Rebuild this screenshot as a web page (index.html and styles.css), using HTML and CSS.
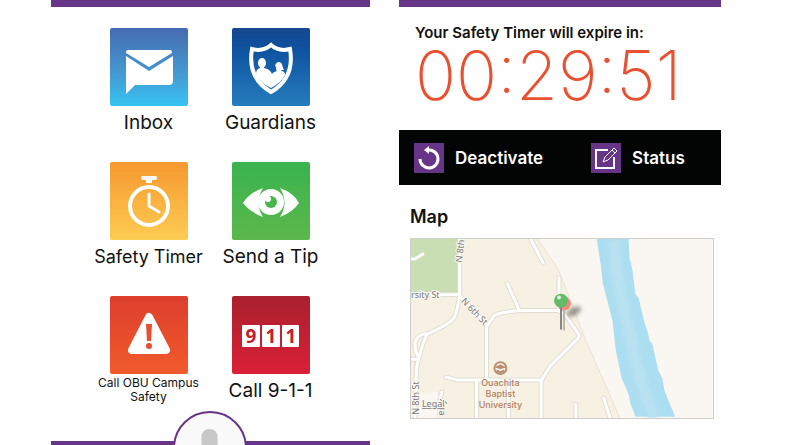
FILE: index.html
```html
<!DOCTYPE html>
<html lang="en">
<head>
<meta charset="utf-8">
<meta name="viewport" content="width=device-width, initial-scale=1">
<title>Campus Safety</title>
<link rel="stylesheet" href="styles.css">
</head>
<body>
<main class="screens">
  <section class="screen home">
    <nav class="tiles">
      <a class="tile" href="#inbox">
        <svg class="icon inbox" viewBox="0 0 78 78" aria-hidden="true">
          <path fill="#fff" d="M18 22h42q2 0 2 3L39 39 16 25q0-3 2-3zM16 28l23 15 24-15v25q0 4-4 4H25l-9 9z"/>
        </svg>
        <span class="label">Inbox</span>
      </a>
      <a class="tile" href="#guardians">
        <svg class="icon guardians" viewBox="0 0 78 78" aria-hidden="true">
          <path fill="none" stroke="#fff" stroke-width="4" d="M39 17q-8 7-19 4-5 29 19 43 24-14 19-43-11 3-19-4z"/>
          <ellipse cx="30" cy="35" rx="4" ry="5" fill="#fff"/>
          <ellipse cx="47" cy="40" rx="3" ry="4" fill="#fff"/>
          <path fill="#fff" d="M43 38q1-4 4-4t4 6l1 2h-3zM24 46q0-5 4-6v-3h4v3q6 1 8 6 1-2 5-3v-2h4v2q4 0 4 4-4 8-14 13-11-5-15-14z"/>
        </svg>
        <span class="label">Guardians</span>
      </a>
      <a class="tile" href="#timer">
        <svg class="icon timer" viewBox="0 0 78 78" aria-hidden="true">
          <circle cx="39" cy="44" r="19" fill="none" stroke="#fff" stroke-width="4"/>
          <path fill="#fff" d="M33 14h13q1 0 1 2t-2 2h-3v3h-6v-3h-3q-2 0-2-2t2-2z"/>
          <path fill="none" stroke="#fff" stroke-width="3" stroke-linecap="round" d="M39 32v12l10 6"/>
        </svg>
        <span class="label medium">Safety Timer</span>
      </a>
      <a class="tile" href="#tip">
        <svg class="icon tip" viewBox="0 0 78 78" aria-hidden="true">
          <path fill="#fff" d="M31 26Q17 31 11 41q7 9 20 14-9-14 0-29zM48 26q14 5 19 15-6 9-19 14 9-14 0-29z"/>
          <circle cx="39" cy="40" r="13" fill="#fff"/>
          <circle cx="39" cy="40" r="6" fill="#49b54d"/>
          <circle cx="36" cy="37" r="3" fill="#fff"/>
        </svg>
        <span class="label">Send a Tip</span>
      </a>
      <a class="tile" href="#campus">
        <svg class="icon campus" viewBox="0 0 78 78" aria-hidden="true">
          <path fill="#fff" stroke="#fff" stroke-width="8" stroke-linejoin="round" d="M39 21 56 54H22z"/>
          <path fill="#e84d2d" d="M36 28h6l-1 17h-4z"/>
          <circle cx="39" cy="50" r="3" fill="#e84d2d"/>
        </svg>
        <span class="label small">Call OBU Campus Safety</span>
      </a>
      <a class="tile" href="tel:911">
        <svg class="icon emergency" viewBox="0 0 78 78" aria-hidden="true">
          <g fill="#fff">
            <rect x="10" y="29" width="18" height="22" rx="1"/>
            <rect x="30" y="29" width="18" height="22" rx="1"/>
            <rect x="50" y="29" width="17" height="22" rx="1"/>
          </g>
          <g class="digits"><text x="19" y="47">9</text><text x="39" y="47">1</text><text x="59" y="47">1</text></g>
        </svg>
        <span class="label">Call 9-1-1</span>
      </a>
    </nav>
    <footer class="dock">
      <button class="mic" type="button" aria-label="Record">
        <svg viewBox="0 0 74 74" aria-hidden="true"><rect x="28" y="17" width="17" height="34" rx="8" fill="#c7c7c7"/></svg>
      </button>
    </footer>
  </section>

  <section class="screen session">
    <div class="countdown">
      <h2 class="caption">Your Safety Timer will expire in:</h2>
      <time class="clock">00:29:51</time>
    </div>
    <div class="actions">
      <button class="action" type="button">
        <svg viewBox="0 0 30 30" aria-hidden="true">
          <path fill="none" stroke="#fff" stroke-width="3" d="M6 16a9 9 0 1 0 8-9"/>
          <path fill="#fff" d="M10 7l5-4v8z"/>
        </svg>
        Deactivate
      </button>
      <button class="action" type="button">
        <svg viewBox="0 0 30 30" aria-hidden="true">
          <path fill="none" stroke="#fff" stroke-width="2" d="M17 7H5v18h18V14"/>
          <path fill="none" stroke="#fff" d="M12 19l2-5 9-9 3 3-9 9zM21 7l3 3"/>
        </svg>
        Status
      </button>
    </div>
    <div class="location">
      <h2 class="heading">Map</h2>
      <svg class="map" viewBox="0 0 304 180" role="img" aria-label="Campus map">
        <defs>
          <filter id="blur" x="-50%" y="-50%" width="200%" height="200%"><feGaussianBlur stdDeviation="2"/></filter>
          <g id="roads">
            <path d="M49-2v58M-2 56h51M49 56q-2 14-5 22-2 6-26 17-11 0-14 9 0 11 4 15M16 96q-4 8-10 31-2 22-2 53M-2 121h8M49 57l28 30M76 143V88l8-11q8-4 28-5h36l7 4 14 20q1 3-2 5l-27 27-9 15v40M97 45l12 27M120-1l13 25M149 39v33M35 139l12 3h85M66 143v39M98 143v39M31 154l-2 9M166 166v16M194 160l7 22"/>
          </g>
        </defs>
        <path fill="#faf6f1" d="M0 0h304v180H0z"/>
        <path fill="#f6f1e2" stroke="#ebe2d2" d="M-1-1h128l8 12 13 19 28 72 35 80H-1z"/>
        <path fill="#c9dfb3" d="M0 0h48v54H0z"/>
        <path fill="#faf6f1" d="M9 155l18-1-1 26H7z"/>
        <path fill="#abdef0" d="M187 0h32l1 19 3 13 3 24 3 3 6 25 3 9 2 9 3 4 6 27 4 7 2 12 3 8 8 19h-40l-5-13-2-10-7-16-6-29-3-28-10-39-2-18z"/>
        <path fill="none" stroke="#b9e1f2" stroke-width="12" filter="url(#blur)" d="M204 0q2 30 7 54 5 26 12 52 6 35 22 74"/>
        <g fill="none" stroke-linejoin="round" stroke-linecap="round">
          <use href="#roads" stroke="#e2ddd2" stroke-width="5"/>
          <use href="#roads" stroke="#fff" stroke-width="3"/>
          <path stroke="#fff" stroke-width="3" d="M0 20h4l8-5"/>
        </g>
        <g class="street">
          <text x="0" y="59">rsity St</text>
          <text transform="translate(51 24) rotate(-83)">N 8th</text>
          <text transform="translate(50 63) rotate(46)">N 6th St</text>
          <text transform="translate(8 177) rotate(-90)">N 8th St</text>
          <text transform="translate(33 178) rotate(-86)">erty</text>
          <text x="11" y="169" class="legal">Legal</text>
        </g>
        <circle cx="90" cy="130" r="6" fill="#fff" stroke="#b98e70" stroke-width="2"/>
        <path fill="#b98e70" d="M84 129l6-3 6 3-6 2zM86 131l4 2 4-2v3q-4 2-8 0z"/>
        <g class="place"><text x="90" y="148">Ouachita</text><text x="90" y="159">Baptist</text><text x="90" y="170">University</text></g>
        <ellipse cx="164" cy="73" rx="8" ry="4" transform="rotate(-28 164 73)" fill="#716d65" opacity=".7" filter="url(#blur)"/>
        <circle cx="154" cy="65" r="7" fill="#ee8b7f"/>
        <path stroke="#bcb8ae" stroke-width="2" d="M154 71v21"/>
        <path stroke="#858585" stroke-width="2" d="M151 68v23"/>
        <circle cx="151" cy="62" r="7" fill="#62bb66"/>
        <circle cx="149" cy="59" r="2" fill="#dff3df"/>
      </svg>
    </div>
  </section>
</main>
</body>
</html>
```
FILE: styles.css
```css
* { box-sizing: border-box; }
body {
  margin: 0;
  background: #fefefe;
  color: #111;
  font-family: Inter, "Liberation Sans", sans-serif;
}
.screens {
  display: grid;
  grid-template-columns: 319fr 322fr;
  gap: 29px;
  min-height: 100vh;
  padding: 0 79px 0 51px;
}
.screen {
  display: flex;
  flex-direction: column;
  overflow: hidden;
  border-top: 7px solid #673587;
}
.tiles {
  display: grid;
  grid-template-columns: 122px 122px;
  grid-auto-rows: 134px;
  justify-content: center;
  padding: 21px 2px 0 0;
}
.tile {
  display: flex;
  flex-direction: column;
  align-items: center;
  color: inherit;
  text-decoration: none;
}
.icon {
  flex: none;
  width: 78px;
  height: 78px;
  border-radius: 2px;
}
.inbox { background: linear-gradient(#476bb3, #449bd3 60%, #36c3f2); }
.guardians { background: linear-gradient(#17478f, #0d519f 25%, #267dbd); }
.timer { background: linear-gradient(#f6982f, #fdcc52); }
.tip { background: linear-gradient(#3ab34f, #5bb84b); }
.campus { background: linear-gradient(#dd3e2d, #f15b2b); }
.emergency { background: linear-gradient(#aa202d, #da2037); }
.digits {
  fill: #c3202f;
  font: 700 19px "Noto Sans", sans-serif;
  text-anchor: middle;
}
.label {
  font-size: 19px;
  line-height: 34px;
  white-space: nowrap;
}
.label.medium { font-size: 18px; }
.label.small {
  width: 110px;
  padding-top: 2px;
  font-size: 12px;
  line-height: 14px;
  text-align: center;
  white-space: normal;
}
.dock {
  position: relative;
  height: 4px;
  margin-top: auto;
  background: #673587;
}
.mic {
  position: absolute;
  top: -30px;
  left: 50%;
  width: 74px;
  height: 74px;
  margin-left: -38px;
  padding: 0;
  border: 2px solid #673587;
  border-radius: 50%;
  background: #f9f9f9;
}
.mic svg { display: block; }
.countdown {
  height: 123px;
  padding: 16px 14px 0 16px;
}
.caption, .heading {
  margin: 0;
  font-weight: 600;
}
.caption {
  font-size: 15px;
  line-height: 20px;
}
.clock {
  display: block;
  color: #e8502f;
  font-size: 68px;
  font-weight: 200;
  line-height: 64px;
  white-space: nowrap;
}
.actions {
  display: flex;
  gap: 48px;
  padding: 13px 15px 12px;
  background: #030505;
}
.action {
  display: flex;
  align-items: center;
  gap: 11px;
  padding: 0;
  border: 0;
  background: none;
  color: #fff;
  font: 600 17px Inter, sans-serif;
}
.action svg {
  width: 30px;
  height: 30px;
  background: #673587;
}
.location { padding: 20px 7px 0 11px; }
.heading {
  font-size: 18px;
  line-height: 24px;
}
.map {
  display: block;
  width: 100%;
  margin-top: 9px;
  border: 1px solid #cfcfcb;
}
.street {
  fill: #777;
  font: 9px "Noto Sans", sans-serif;
  paint-order: stroke;
  stroke: #faf6f1;
  stroke-width: 2px;
}
.legal { text-decoration: underline; }
.place {
  fill: #b07f5f;
  font: 500 9px Inter, sans-serif;
  text-anchor: middle;
}
```
